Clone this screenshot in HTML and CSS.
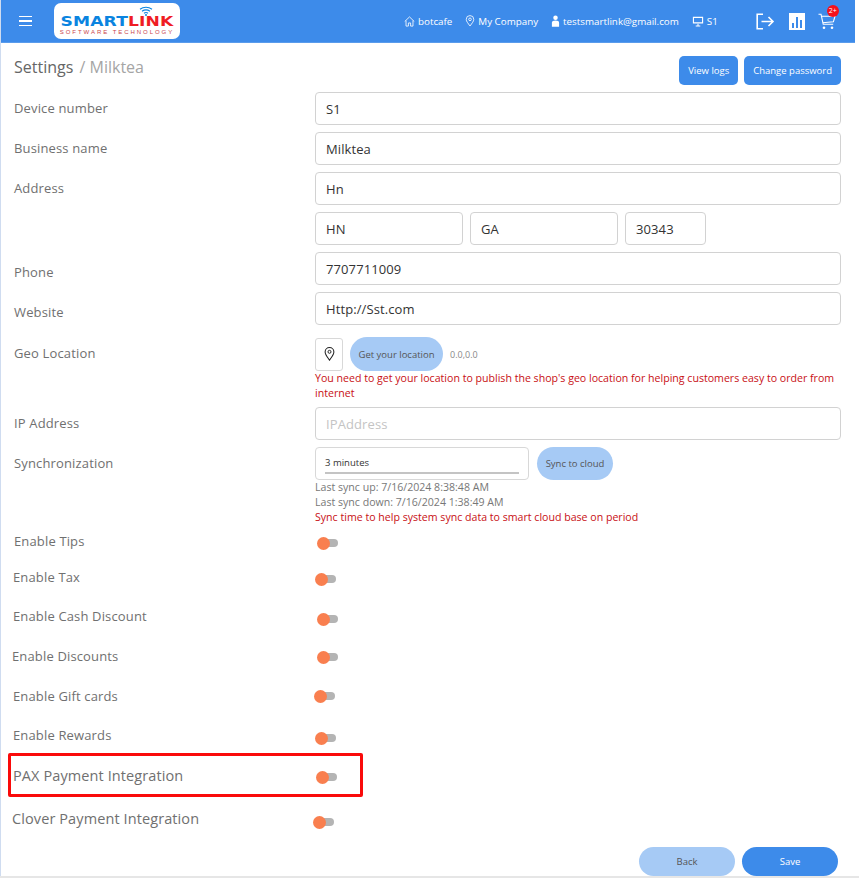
FILE: index.html
```html
<!DOCTYPE html>
<html lang="en">
<head>
<meta charset="utf-8">
<title>Settings</title>
<link rel="stylesheet" href="styles.css">
</head>
<body>
<div class="page">
  <header class="topbar">
    <button class="menu" aria-label="Menu"><span></span><span></span><span></span></button>
    <div class="logo">
      <svg class="wifi" viewBox="0 0 14 10" width="14" height="10"><g fill="none" stroke="#0a84e0" stroke-width="1.1"><path d="M1 3.2C4.5.6 9.5.6 13 3.2"/><path d="M3 5.2C5.4 3.6 8.6 3.6 11 5.2"/><path d="M5 7.2C6.2 6.4 7.8 6.4 9 7.2"/></g><circle cx="7" cy="9" r="1" fill="#0a84e0"/></svg>
      <div class="logo-name"><span class="logo-blue">SMART</span><span class="logo-red">LINK</span></div>
      <div class="logo-sub">SOFTWARE TECHNOLOGY</div>
    </div>
    <nav class="info">
      <span class="info-item"><svg viewBox="0 0 12 12" width="11" height="11"><path d="M.8 6 6 1l5.2 5M2.2 5v6h2.600V7.600h2.400V11h2.600V5" fill="none" stroke="#fff" stroke-width=".9"/></svg>botcafe</span>
      <span class="info-item"><svg viewBox="0 0 12 14" width="10" height="12"><path d="M6 13C3.500 9.500 1.500 7.500 1.500 5a4.500 4.500 0 0 1 9 0c0 2.500-2 4.500-4.500 8Z" fill="none" stroke="#fff" stroke-width="1"/><circle cx="6" cy="5" r="1.600" fill="none" stroke="#fff" stroke-width="1"/></svg>My Company</span>
      <span class="info-item"><svg viewBox="0 0 10 13" width="9" height="12"><circle cx="5" cy="3" r="2.500" fill="#fff"/><path d="M1 13V8.500C1 6.800 2.500 6 5 6s4 .8 4 2.500V13Z" fill="#fff"/></svg>testsmartlink@gmail.com</span>
      <span class="info-item"><svg viewBox="0 0 13 12" width="12" height="11"><path d="M1.500 1.500h10v6h-10Z" fill="none" stroke="#fff" stroke-width="1.200"/><path d="M6.500 8.500v2M4 10.800h5" fill="none" stroke="#fff" stroke-width="1.100"/></svg>S1</span>
    </nav>
    <div class="actions">
      <svg viewBox="0 0 19 17" width="19" height="17"><path d="M7 1.200H1.200v14.600H7" fill="none" stroke="#fff" stroke-width="1.600"/><path d="M5.500 8.500H17M12.500 4l4.500 4.500L12.500 13" fill="none" stroke="#fff" stroke-width="1.600"/></svg>
      <svg viewBox="0 0 16 17" width="16" height="17"><path fill="#fff" fill-rule="evenodd" d="M0 0h16v17H0ZM3 10v5h2v-5Zm4-6v11h2V4Zm4 3v8h2V7Z"/></svg>
      <span class="cart">
        <svg viewBox="0 0 18 17" width="18" height="17"><path d="M.5 1.200H3l2.200 10h10M3.400 3.200H17l-1.600 5.600-10.800 1" fill="none" stroke="#fff" stroke-width="1.100"/><circle cx="6" cy="14.800" r="1.300" fill="#fff"/><circle cx="14" cy="14.800" r="1.300" fill="#fff"/></svg>
        <span class="badge">2+</span>
      </span>
    </div>
  </header>

  <main class="content">
    <div class="title-row">
      <h1 class="title">Settings <span class="crumb">/ Milktea</span></h1>
      <div class="title-buttons">
        <button class="btn">View logs</button>
        <button class="btn">Change password</button>
      </div>
    </div>

    <div class="row"><label class="label">Device number</label><div class="field">S1</div></div>
    <div class="row"><label class="label">Business name</label><div class="field">Milktea</div></div>
    <div class="row"><label class="label">Address</label><div class="field">Hn</div></div>
    <div class="row">
      <label class="label"></label>
      <div class="split">
        <div class="field city">HN</div>
        <div class="field state">GA</div>
        <div class="field zip">30343</div>
      </div>
    </div>
    <div class="row"><label class="label label-low">Phone</label><div class="field">7707711009</div></div>
    <div class="row"><label class="label label-low">Website</label><div class="field">Http://Sst.com</div></div>

    <div class="row geo">
      <label class="label">Geo Location</label>
      <div class="control">
        <div class="geo-line">
          <span class="pin-box"><svg viewBox="0 0 12 16" width="11" height="14"><path d="M6 15C3.200 11 1 8.500 1 5.600a5 5 0 0 1 10 0C11 8.500 8.800 11 6 15Z" fill="none" stroke="#222" stroke-width="1.200"/><circle cx="6" cy="5.500" r="1.700" fill="none" stroke="#222" stroke-width="1.100"/></svg></span>
          <button class="pill">Get your location</button>
          <span class="coords">0.0,0.0</span>
        </div>
        <p class="warn">You need to get your location to publish the shop's geo location for helping customers easy to order from internet</p>
      </div>
    </div>

    <div class="row"><label class="label">IP Address</label><div class="field placeholder">IPAddress</div></div>

    <div class="row sync">
      <label class="label">Synchronization</label>
      <div class="control">
        <div class="sync-line">
          <div class="select"><span class="select-value">3 minutes</span></div>
          <button class="pill pill-sync">Sync to cloud</button>
        </div>
        <p class="note">Last sync up: 7/16/2024 8:38:48 AM</p>
        <p class="note">Last sync down: 7/16/2024 1:38:49 AM</p>
        <p class="warn">Sync time to help system sync data to smart cloud base on period</p>
      </div>
    </div>

    <div class="switch-row tips"><span class="switch-label">Enable Tips</span><span class="toggle"></span></div>
    <div class="switch-row tax"><span class="switch-label">Enable Tax</span><span class="toggle"></span></div>
    <div class="switch-row cash"><span class="switch-label">Enable Cash Discount</span><span class="toggle"></span></div>
    <div class="switch-row discounts"><span class="switch-label">Enable Discounts</span><span class="toggle"></span></div>
    <div class="switch-row gift"><span class="switch-label">Enable Gift cards</span><span class="toggle"></span></div>
    <div class="switch-row rewards"><span class="switch-label">Enable Rewards</span><span class="toggle"></span></div>
    <div class="switch-row pax"><span class="switch-label">PAX Payment Integration</span><span class="toggle"></span></div>
    <div class="switch-row clover"><span class="switch-label">Clover Payment Integration</span><span class="toggle"></span></div>

    <div class="footer">
      <button class="round back">Back</button>
      <button class="round save">Save</button>
    </div>
  </main>
</div>
<div class="status-line"></div>
</body>
</html>
```

FILE: styles.css
```css
* { box-sizing: border-box; }
html, body { margin: 0; height: 878px; overflow: hidden; background: #fff; }
body { font-family: "Open Sans", sans-serif; color: #707070; }
button { font-family: inherit; border: 0; cursor: pointer; padding: 0; }
p { margin: 0; }

.page {
  width: 855px;
  height: 876px;
  border-left: 1px solid #cfdcf0;
}
.status-line { height: 2px; background: #e6e6e6; }

.topbar {
  height: 43px;
  background: #3d8bea;
  border-bottom: 1px solid #5a9cec;
  display: flex;
  align-items: center;
  color: #fff;
}
.menu {
  width: 13px;
  margin-left: 18px;
  background: none;
  display: flex;
  flex-direction: column;
  gap: 3px;
}
.menu span { display: block; height: 1.5px; background: #fff; }
.logo {
  position: relative;
  width: 126px;
  height: 36px;
  margin-left: 22px;
  background: #fff;
  border-radius: 7px;
  padding-top: 12px;
  text-align: center;
}
.wifi { position: absolute; left: 85px; top: 3px; }
.logo-name {
  font-family: "DejaVu Sans", sans-serif;
  font-weight: 700;
  font-size: 13.5px;
  line-height: 13px;
  letter-spacing: .1px;
  transform: scaleX(1.27);
}
.logo-blue { color: #0a84e0; }
.logo-red { color: #ef1c24; }
.logo-sub {
  font-family: "Liberation Sans", sans-serif;
  font-size: 6px;
  line-height: 8px;
  letter-spacing: 1.95px;
  color: #c9444c;
  white-space: nowrap;
}
.info {
  display: flex;
  align-items: center;
  gap: 13px;
  margin-left: 224px;
  font-size: 9.800px;
  white-space: nowrap;
}
.info-item { display: flex; align-items: center; gap: 3px; }
.actions {
  display: flex;
  align-items: center;
  gap: 14px;
  margin-left: 38px;
}
.cart { position: relative; display: flex; margin-left: -1px; }
.badge {
  position: absolute;
  left: 9px;
  top: -8px;
  width: 12px;
  height: 12px;
  border-radius: 50%;
  background: #f4111b;
  color: #fff;
  font-size: 7px;
  line-height: 12px;
  text-align: center;
}

.content { padding-left: 13px; }

.title-row {
  display: flex;
  justify-content: space-between;
  height: 49px;
  padding-top: 13px;
  width: 827px;
}
.title {
  margin: 0;
  font-size: 16px;
  font-weight: 500;
  line-height: 22px;
  color: #666;
}
.crumb { font-weight: 500; color: #a5a5a5; font-size: 16px; margin-left: 2px; }
.title-buttons { display: flex; gap: 6px; }
.btn {
  height: 29px;
  padding: 0 9px;
  background: #3d8bea;
  color: #fff;
  font-size: 9.500px;
  border-radius: 5px;
}

.row {
  display: flex;
  width: 827px;
  margin-bottom: 7px;
}
.label {
  flex: 0 0 301px;
  font-size: 13px;
  line-height: 20px;
  letter-spacing: .15px;
  color: #707070;
  padding-top: 6px;
}
.label-low { padding-top: 10px; }
.field {
  flex: 1;
  height: 33px;
  border: 1px solid #d2d2d2;
  border-radius: 4px;
  padding-left: 10px;
  font-size: 13px;
  line-height: 33px;
  letter-spacing: .1px;
  color: #333;
}
.split { flex: 1; display: flex; gap: 7px; }
.split .field { flex: none; }
.city, .state { width: 148px; }
.zip { width: 81px; }
.field.placeholder { color: #c4c4c4; }

.geo { margin-bottom: 6px; height: 69px; padding-top: 5px; }
.control { flex: 1; }
.geo-line { display: flex; align-items: center; height: 34px; }
.pin-box {
  width: 28px;
  height: 33px;
  border: 1px solid #d8d8d8;
  border-radius: 3px;
  display: flex;
  align-items: center;
  justify-content: center;
}
.pill {
  width: 93px;
  height: 34px;
  margin-left: 7px;
  background: #a6caf5;
  color: #555;
  font-size: 9.500px;
  border-radius: 17px;
}
.coords { margin-left: 7px; font-size: 9px; color: #888; }
.warn {
  font-size: 10.600px;
  line-height: 15px;
  color: #c80f14;
}

.sync { height: 76px; margin-bottom: 0; }
.sync-line { display: flex; align-items: center; height: 33px; }
.select {
  width: 214px;
  height: 33px;
  border: 1px solid #d8d8d8;
  border-radius: 4px;
  padding: 0 9px;
}
.select-value {
  display: block;
  height: 26px;
  border-bottom: 2px solid #c4c4c4;
  font-size: 9.500px;
  line-height: 29px;
  color: #333;
}
.pill-sync { width: 76px; height: 33px; margin-left: 8px; }
.note { font-size: 10.600px; line-height: 15px; color: #777; }

.switch-row {
  display: flex;
  align-items: center;
  position: relative;
  font-size: 13px;
  letter-spacing: .15px;
  color: #707070;
}
.switch-label { display: block; margin-left: -1px; }
.toggle {
  position: absolute;
  width: 19.500px;
  height: 8px;
  border-radius: 4px;
  background: #b4b4b4;
}
.toggle::before {
  content: "";
  position: absolute;
  left: -1px;
  top: -2.500px;
  width: 13px;
  height: 13px;
  border-radius: 50%;
  background: #f97f4f;
}
.tips { height: 36px; }
.tips .switch-label { margin-left: 0; }
.tips .toggle { left: 304px; top: 16px; }
.tax { height: 36px; }
.tax .toggle { left: 302px; top: 16px; }
.cash { height: 42px; }
.cash .toggle { left: 304px; top: 20px; }
.discounts { height: 38px; }
.discounts .switch-label { margin-left: -2px; }
.discounts .toggle { left: 304px; top: 16px; }
.gift { height: 42px; }
.gift .toggle { left: 301px; top: 17px; }
.rewards { height: 36px; }
.rewards .toggle { left: 302px; top: 17px; }
.pax {
  height: 44px;
  margin-left: -6px;
  width: 355px;
  border: 3px solid #fa0a0a;
  border-radius: 2px;
  font-size: 14.500px;
  letter-spacing: .1px;
}
.pax .switch-label { margin-left: 2px; }
.pax .toggle { left: 306px; top: 17px; }
.clover { height: 42px; font-size: 14.500px; letter-spacing: .1px; }
.clover .switch-label { margin-left: -2px; }
.clover .toggle { left: 300px; top: 21px; }

.footer {
  display: flex;
  justify-content: flex-end;
  gap: 7px;
  width: 824px;
  margin-top: 8px;
}
.round {
  width: 96px;
  height: 29px;
  border-radius: 15px;
  font-size: 9.500px;
}
.back { background: #a6caf5; color: #555; }
.save { background: #3d8bea; color: #fff; }
```
